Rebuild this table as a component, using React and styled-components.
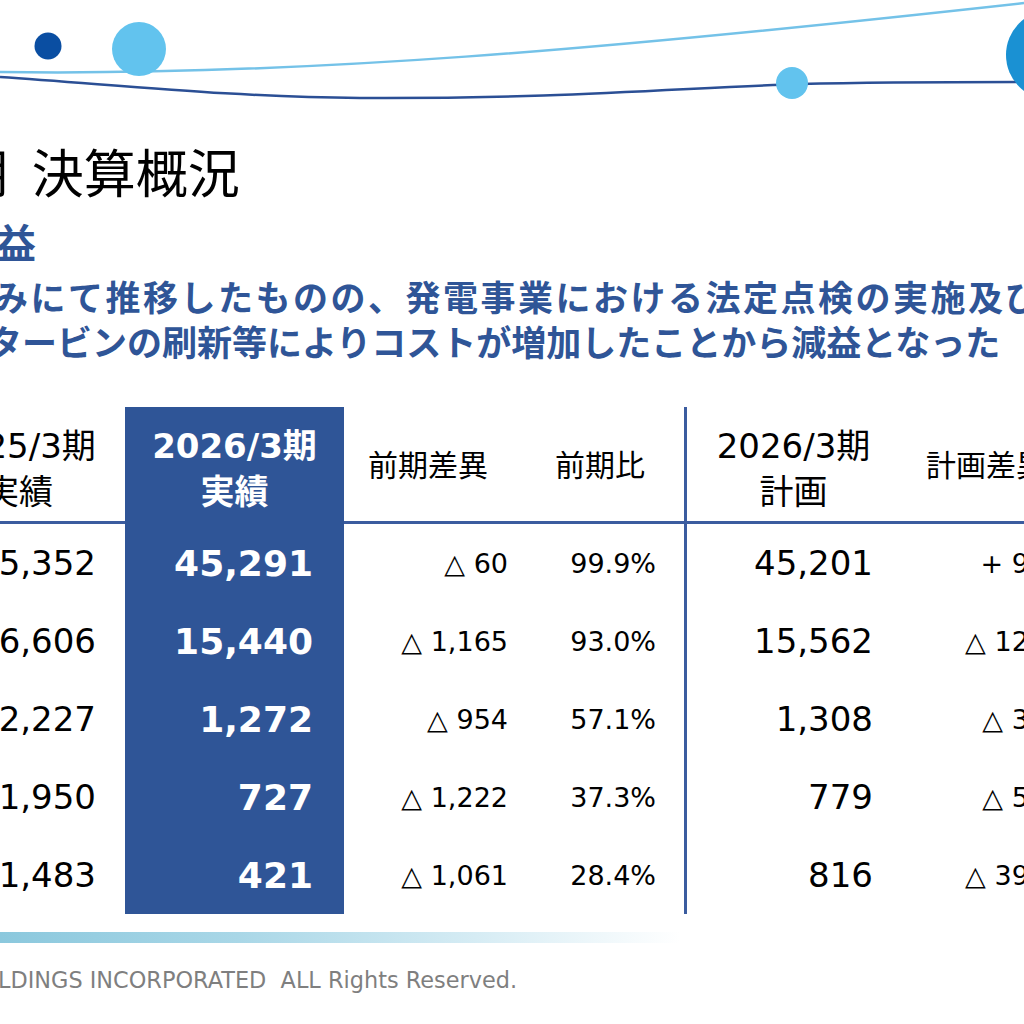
import React from 'react';
import styled, { createGlobalStyle } from 'styled-components';

const BLUE = '#2f5597';
const RULE = '#3b5c9f';

const GlobalStyle = createGlobalStyle`
  html, body {
    margin: 0;
    padding: 0;
    background: #ffffff;
  }
  body {
    font-family: 'Noto Sans CJK JP', sans-serif;
  }
`

const Page = styled.div`
  width: 1024px;
  height: 1024px;
  overflow: hidden;
  display: flex;
  flex-direction: column;
  background: #ffffff;
`
const DecoSvg = styled.svg`
  display: block;
  flex-shrink: 0;
`
const Title = styled.h1`
  margin: 30px 0 0 -44px;
  font-family: 'Noto Sans CJK JP', sans-serif;
  font-weight: 400;
  font-size: 52px;
  line-height: 62px;
  word-spacing: 12px;
  color: #000000;
  white-space: nowrap;
`
const SubHead = styled.h2`
  margin: 14px 0 0 -4px;
  font-family: 'Noto Sans CJK JP', sans-serif;
  font-weight: 700;
  font-size: 40px;
  line-height: 50px;
  color: ${BLUE};
  white-space: nowrap;
`
const LeadBox = styled.div`
  margin-top: 7px;
  display: flex;
  flex-direction: column;
`
const LeadLine = styled.p`
  margin: 0 0 0 ${p => p.$shift}px;
  font-family: 'Noto Sans CJK JP', sans-serif;
  font-weight: 700;
  font-size: 35px;
  line-height: 45px;
  letter-spacing: ${p => p.$track}px;
  color: ${BLUE};
  white-space: nowrap;
`
const Table = styled.div`
  margin: 44px 0 0 -87px;
  display: grid;
  grid-template-columns: 212px 219px 186px 157px 217px 164px;
  grid-template-rows: 117px repeat(5, 78px);
  font-family: 'DejaVu Sans', 'Noto Sans CJK JP', sans-serif;
  color: #000000;
  flex-shrink: 0;
`
const HeadCell = styled.div`
  box-sizing: border-box;
  padding: ${p => (p.$lines > 1 ? 9 : 4)}px ${p => p.$pad}px 0 0;
  display: flex;
  flex-direction: column;
  justify-content: center;
  align-items: center;
  font-size: ${p => p.$size}px;
  font-weight: ${p => (p.$hl ? 700 : 400)};
  line-height: 46px;
  white-space: nowrap;
  color: ${p => (p.$hl ? '#ffffff' : '#000000')};
  background: ${p => (p.$hl ? BLUE : 'transparent')};
  border-bottom: 3px solid ${p => (p.$hl ? BLUE : RULE)};
  border-right: ${p => (p.$rule ? `3px solid ${RULE}` : 'none')};
`
const Cell = styled.div`
  box-sizing: border-box;
  padding-right: ${p => p.$pad}px;
  display: flex;
  align-items: center;
  justify-content: flex-end;
  font-size: ${p => p.$size}px;
  font-weight: ${p => (p.$hl ? 700 : 400)};
  white-space: pre;
  color: ${p => (p.$hl ? '#ffffff' : '#000000')};
  background: ${p => (p.$hl ? BLUE : 'transparent')};
  border-right: ${p => (p.$rule ? `3px solid ${RULE}` : 'none')};
`
const Bar = styled.div`
  margin-top: 18px;
  width: 680px;
  height: 11px;
  flex-shrink: 0;
  background: linear-gradient(to right, #8bc8dd 0%, #a9d7e7 35%, #d6ecf4 70%, #ffffff 100%);
`
const Footer = styled.div`
  margin: 24px 0 0 -2px;
  font-family: 'DejaVu Sans', sans-serif;
  font-size: 22.4px;
  line-height: 26px;
  color: #7f7f7f;
  white-space: pre;
`

const columns = [
  { key: 'prev', head: ['2025/3期', '実績'], headSize: 34, headPad: 0, size: 34, pad: 29 },
  { key: 'actual', head: ['2026/3期', '実績'], headSize: 34, headPad: 0, size: 36, pad: 31, hl: true },
  { key: 'diff', head: ['前期差異'], headSize: 30, headPad: 18, size: 27, pad: 22 },
  { key: 'ratio', head: ['前期比'], headSize: 30, headPad: 14, size: 27, pad: 28, rule: true },
  { key: 'plan', head: ['2026/3期', '計画'], headSize: 34, headPad: 4, size: 34, pad: 31 },
  { key: 'pdiff', head: ['計画差異'], headSize: 30, headPad: 0, size: 27, pad: 22 },
];

const rows = [
  { prev: '45,352', actual: '45,291', diff: '△ 60', ratio: '99.9%', plan: '45,201', pdiff: '+ 90' },
  { prev: '16,606', actual: '15,440', diff: '△ 1,165', ratio: '93.0%', plan: '15,562', pdiff: '△ 122' },
  { prev: '2,227', actual: '1,272', diff: '△ 954', ratio: '57.1%', plan: '1,308', pdiff: '△ 36' },
  { prev: '1,950', actual: '727', diff: '△ 1,222', ratio: '37.3%', plan: '779', pdiff: '△ 52' },
  { prev: '1,483', actual: '421', diff: '△ 1,061', ratio: '28.4%', plan: '816', pdiff: '△ 395' },
];

const Deco = () => (
  <DecoSvg width="1024" height="110" viewBox="0 0 1024 110">
    <path d="M0 72 C300 76, 600 50, 1024 3" fill="none" stroke="#74c2e8" strokeWidth="2.5" />
    <path
      d="M0 77 C120 85, 230 97, 360 98 C560 99, 680 88, 800 84 C880 82, 960 82, 1024 82"
      fill="none"
      stroke="#2b4f95"
      strokeWidth="2.5"
    />
    <circle cx="48" cy="46" r="13.5" fill="#0a4ea2" />
    <circle cx="139" cy="49" r="27" fill="#62c3ee" />
    <circle cx="792" cy="83" r="16" fill="#62c3ee" />
    <circle cx="1051" cy="55" r="45" fill="#1a91d3" />
  </DecoSvg>
)

const App = () => {
  return (
    <Page>
      <GlobalStyle />
      <Deco />
      <Title>期 決算概況</Title>
      <SubHead>益</SubHead>
      <LeadBox>
        <LeadLine $shift={-7} $track={2.5}>みにて推移したものの、発電事業における法定点検の実施及び</LeadLine>
        <LeadLine $shift={-13} $track={0}>タービンの刷新等によりコストが増加したことから減益となった</LeadLine>
      </LeadBox>
      <Table>
        {columns.map(c => (
          <HeadCell
            key={c.key}
            $size={c.headSize}
            $pad={c.headPad}
            $hl={c.hl}
            $rule={c.rule}
            $lines={c.head.length}
          >
            {c.head.map(t => (
              <span key={t}>{t}</span>
            ))}
          </HeadCell>
        ))}
        {rows.map((r, i) =>
          columns.map(c => (
            <Cell key={`${i}-${c.key}`} $size={c.size} $pad={c.pad} $hl={c.hl} $rule={c.rule}>
              {r[c.key]}
            </Cell>
          ))
        )}
      </Table>
      <Bar />
      <Footer>LDINGS INCORPORATED  ALL Rights Reserved.</Footer>
    </Page>
  )
}

export default App;
